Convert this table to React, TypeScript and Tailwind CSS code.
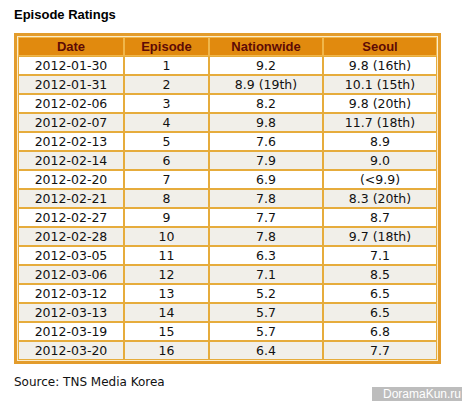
const rows = [
  ["2012-01-30", "1", "9.2", "9.8 (16th)"],
  ["2012-01-31", "2", "8.9 (19th)", "10.1 (15th)"],
  ["2012-02-06", "3", "8.2", "9.8 (20th)"],
  ["2012-02-07", "4", "9.8", "11.7 (18th)"],
  ["2012-02-13", "5", "7.6", "8.9"],
  ["2012-02-14", "6", "7.9", "9.0"],
  ["2012-02-20", "7", "6.9", "(<9.9)"],
  ["2012-02-21", "8", "7.8", "8.3 (20th)"],
  ["2012-02-27", "9", "7.7", "8.7"],
  ["2012-02-28", "10", "7.8", "9.7 (18th)"],
  ["2012-03-05", "11", "6.3", "7.1"],
  ["2012-03-06", "12", "7.1", "8.5"],
  ["2012-03-12", "13", "5.2", "6.5"],
  ["2012-03-13", "14", "5.7", "6.5"],
  ["2012-03-19", "15", "5.7", "6.8"],
  ["2012-03-20", "16", "6.4", "7.7"],
];

const heads = ["Date", "Episode", "Nationwide", "Seoul"];
const widths = ["w-[106px]", "w-[85px]", "w-[114px]", "w-[114px]"];

export default function App() {
  return (
    <div className="relative w-[462px] h-[401px] bg-white overflow-hidden pl-[14px] pt-[7px]">
      <h2 className="font-['Liberation_Sans',Arial,sans-serif] font-bold text-[13px] leading-[16px] text-black">
        Episode Ratings
      </h2>

      <div className="mt-[10px] w-[427px] border-[3px] border-[#e39c2c] bg-[#fbeccb] p-px">
        <table className="w-[419px] table-fixed border-separate border-spacing-0">
          <thead>
            <tr>
              {heads.map((h, i) => (
                <th
                  key={h}
                  className={`${widths[i]} h-[19px] p-0 border border-[#f0b64a] bg-[#e18a0e] text-center font-['Liberation_Sans',Arial,sans-serif] font-bold text-[13px] leading-[17px] text-[#5e0a06]`}
                >
                  {h}
                </th>
              ))}
            </tr>
          </thead>
          <tbody>
            {rows.map((r, ri) => (
              <tr key={ri} className={ri % 2 === 0 ? "bg-white" : "bg-[#f1efe9]"}>
                {r.map((c, ci) => (
                  <td
                    key={ci}
                    className="h-[19px] p-0 border border-[#e6ac3c] text-center font-['DejaVu_Sans',Verdana,sans-serif] text-[12.5px] leading-[17px] text-[#111]"
                  >
                    {c}
                  </td>
                ))}
              </tr>
            ))}
          </tbody>
        </table>
      </div>

      <p className="mt-[11px] font-['DejaVu_Sans',Verdana,sans-serif] text-[12px] leading-[15px] text-[#111]">
        Source: TNS Media Korea
      </p>

      <div className="absolute right-0 bottom-0 w-[90px] h-[14px] bg-[#bdbdbd] text-white font-['Liberation_Sans',Arial,sans-serif] text-[12px] leading-[14px] pl-[11px]">
        DoramaKun.ru
      </div>
    </div>
  );
}
